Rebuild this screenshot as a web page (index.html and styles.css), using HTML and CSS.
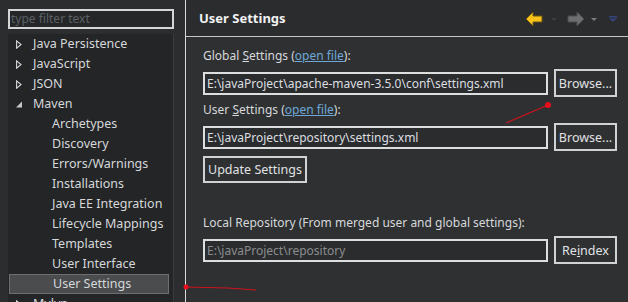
FILE: index.html
```html
<!DOCTYPE html>
<html lang="en">
<head>
    <meta charset="UTF-8">
    <title>Preferences - User Settings</title>
    <link rel="stylesheet" href="styles.css">
</head>
<body>
<div class="dialog">
    <div class="sidebar">
        <div class="filter">type filter text</div>
        <div class="tree">
            <div class="node"><svg class="twisty" width="6" height="9" viewBox="0 0 6 9"><path d="M0.6 0.8 L5 4.5 L0.6 8.2 Z" fill="none" stroke="#d8d8d8" stroke-width="1.1"/></svg>Java Persistence</div>
            <div class="node"><svg class="twisty" width="6" height="9" viewBox="0 0 6 9"><path d="M0.6 0.8 L5 4.5 L0.6 8.2 Z" fill="none" stroke="#d8d8d8" stroke-width="1.1"/></svg>JavaScript</div>
            <div class="node"><svg class="twisty" width="6" height="9" viewBox="0 0 6 9"><path d="M0.6 0.8 L5 4.5 L0.6 8.2 Z" fill="none" stroke="#d8d8d8" stroke-width="1.1"/></svg>JSON</div>
            <div class="node"><svg class="twisty open" width="6" height="7" viewBox="0 0 6 7"><path d="M6 0.5 L6 6.5 L0 6.5 Z" fill="#c8c8c8"/></svg>Maven</div>
            <div class="node child">Archetypes</div>
            <div class="node child">Discovery</div>
            <div class="node child">Errors/Warnings</div>
            <div class="node child">Installations</div>
            <div class="node child">Java EE Integration</div>
            <div class="node child">Lifecycle Mappings</div>
            <div class="node child">Templates</div>
            <div class="node child">User Interface</div>
            <div class="node child selected">User Settings</div>
            <div class="node"><svg class="twisty" width="6" height="9" viewBox="0 0 6 9"><path d="M0.6 0.8 L5 4.5 L0.6 8.2 Z" fill="none" stroke="#d8d8d8" stroke-width="1.1"/></svg>Mylyn</div>
        </div>
    </div>
    <div class="sash"></div>
    <div class="page">
        <div class="page-header">
            <h2>User Settings</h2>
            <div class="nav">
                <svg class="arrow" width="18" height="16" viewBox="0 0 18 16">
                    <path d="M1 8 L8 1 L8 5 L17 5 L17 11 L8 11 L8 15 Z" fill="#f6c21a" stroke="#6b5410" stroke-width="1"/>
                </svg>
                <span class="drop dim"></span>
                <svg class="arrow" width="18" height="16" viewBox="0 0 18 16">
                    <path d="M17 8 L10 1 L10 5 L1 5 L1 11 L10 11 L10 15 Z" fill="#6c6e70" stroke="#4a4c4e" stroke-width="1"/>
                </svg>
                <span class="drop"></span>
                <svg class="menu" width="8" height="6" viewBox="0 0 8 6">
                    <rect x="0" y="0" width="8" height="1.5" fill="#34447a"/>
                    <path d="M0 2.5 L8 2.5 L4 6 Z" fill="#34447a"/>
                </svg>
            </div>
        </div>
        <div class="content">
            <div class="label">Global <u>S</u>ettings (<a href="#">open file</a>):</div>
            <div class="row">
                <div class="field">E:\javaProject\apache-maven-3.5.0\conf\settings.xml</div>
                <button class="btn">Browse...</button>
            </div>
            <div class="label">User <u>S</u>ettings (<a href="#">open file</a>):</div>
            <div class="row">
                <div class="field">E:\javaProject\repository\settings.xml</div>
                <button class="btn">Browse...</button>
            </div>
            <button class="btn update">Update Settings</button>
            <div class="label local">Local Repository (From merged user and global settings):</div>
            <div class="row">
                <div class="field disabled">E:\javaProject\repository</div>
                <button class="btn">Re<u>i</u>ndex</button>
            </div>
        </div>
    </div>
</div>
<svg class="marks" width="628" height="302" viewBox="0 0 628 302">
    <line x1="506" y1="123" x2="548" y2="105" stroke="#d0141c" stroke-width="1.2"/>
    <circle cx="548" cy="105" r="3" fill="#e8101a"/>
    <polyline points="186,287 228,288 256,290" fill="none" stroke="#d0141c" stroke-width="1.2"/>
    <circle cx="186" cy="287" r="2.5" fill="#e8101a"/>
</svg>
</body>
</html>
```

FILE: styles.css
```css
body {
    margin: 0;
    padding: 0;
    background-color: #2e3032;
    font-family: "Noto Sans", "Open Sans", sans-serif;
    font-size: 12px;
    color: #d6d8da;
    overflow: hidden;
    position: relative;
}

.dialog {
    display: flex;
    width: 628px;
    height: 302px;
    overflow: hidden;
}

.sidebar {
    width: 185px;
    padding: 9px 0 0 8px;
    box-sizing: border-box;
    background-color: #2b2d2f;
}

.filter {
    width: 166px;
    height: 20px;
    box-sizing: border-box;
    border: 2px solid #d4d6d8;
    background-color: #242628;
    color: #5c6064;
    font-size: 12px;
    line-height: 16px;
    padding-left: 1px;
}

.tree {
    margin-top: 5px;
    width: 166px;
    height: 268px;
    background-color: #232527;
    border-right: 1px solid #3a3c3e;
    box-sizing: border-box;
}

.node {
    height: 20px;
    line-height: 20px;
    padding-left: 25px;
    position: relative;
    white-space: nowrap;
    font-size: 12.5px;
}

.node.child {
    padding-left: 44px;
}

.node.selected {
    margin: 0 4px 0 1px;
    padding-left: 43px;
    line-height: 18px;
    box-sizing: border-box;
    background-color: #4a4c4e;
    border: 1px solid #6c6e70;
}

.twisty {
    position: absolute;
    left: 8px;
    top: 6px;
}

.twisty.open {
    top: 7px;
}

.sash {
    width: 1px;
    background-color: #d8dadc;
}

.page {
    flex: 1;
    display: flex;
    flex-direction: column;
}

.page-header {
    height: 36px;
    display: flex;
    align-items: center;
    justify-content: space-between;
    padding: 0 11px 0 13px;
    background-color: #2a2c2e;
    border-bottom: 1px solid #c4c6c8;
}

.page-header h2 {
    margin: 0;
    font-size: 13px;
    font-weight: bold;
    color: #f2f2f2;
}

.nav {
    display: flex;
    align-items: center;
    margin-top: 2px;
}

.arrow {
    display: block;
}

.drop {
    width: 0;
    height: 0;
    margin: 0 8px 0 6px;
    border-top: 3px solid #7a7c7e;
    border-left: 3px solid transparent;
    border-right: 3px solid transparent;
}

.drop.dim {
    border-top-color: #3c3e40;
    margin: 0 10px 0 8px;
}

.menu {
    display: block;
    margin-left: 4px;
}

.content {
    padding: 11px 10px 0 17px;
}

.label {
    height: 16px;
    line-height: 16px;
    white-space: nowrap;
}

.label a {
    color: #6fa8d6;
}

.label.local {
    margin-top: 32px;
}

.row {
    display: flex;
    align-items: center;
    gap: 6px;
    margin-top: 5px;
    margin-bottom: 5px;
}

.field {
    width: 345px;
    height: 23px;
    box-sizing: border-box;
    border: 2px solid #dcdee0;
    background-color: #2a2c2e;
    padding-left: 2px;
    line-height: 19px;
    white-space: nowrap;
    color: #dcdee0;
}

.field.disabled {
    color: #8a8c8e;
}

.btn {
    width: 63px;
    height: 28px;
    box-sizing: border-box;
    border: 2px solid #d0d2d4;
    background-color: #2e3032;
    color: #e0e2e4;
    font-family: "Noto Sans", "Open Sans", sans-serif;
    font-size: 12.5px;
    padding: 0;
}

.btn.update {
    display: block;
    width: 104px;
    height: 27px;
    margin-top: 4px;
}

.marks {
    position: absolute;
    left: 0;
    top: 0;
    pointer-events: none;
}
```
